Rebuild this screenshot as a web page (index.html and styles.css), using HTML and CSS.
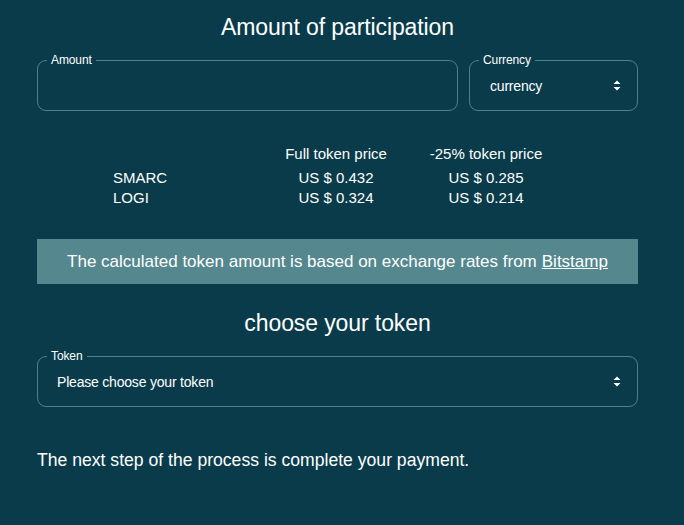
FILE: index.html
```html
<!DOCTYPE html>
<html>
<head>
<meta charset="utf-8">
<link rel="stylesheet" href="styles.css">
</head>
<body>
<main class="page">
  <h1 class="title">Amount of participation</h1>
  <div class="amount-row">
    <fieldset class="field field-amount">
      <legend>Amount</legend>
      <div class="control"></div>
    </fieldset>
    <fieldset class="field field-currency">
      <legend>Currency</legend>
      <div class="control select">
        <span>currency</span>
        <svg class="arrows" width="8" height="11" viewBox="0 0 8 11"><path d="M4 0.5 L7.5 4 L0.5 4 Z M4 10.5 L7.5 7 L0.5 7 Z" fill="#ffffff"/></svg>
      </div>
    </fieldset>
  </div>

  <div class="prices">
    <span></span><span class="head">Full token price</span><span class="head">-25% token price</span>
    <span class="name">SMARC</span><span class="val">US $ 0.432</span><span class="val">US $ 0.285</span>
    <span class="name">LOGI</span><span class="val">US $ 0.324</span><span class="val">US $ 0.214</span>
  </div>

  <div class="banner">The calculated token amount is based on exchange rates from <a href="#">Bitstamp</a></div>

  <h2 class="title title2">choose your token</h2>
  <fieldset class="field field-token">
    <legend>Token</legend>
    <div class="control select">
      <span>Please choose your token</span>
      <svg class="arrows" width="8" height="11" viewBox="0 0 8 11"><path d="M4 0.5 L7.5 4 L0.5 4 Z M4 10.5 L7.5 7 L0.5 7 Z" fill="#ffffff"/></svg>
    </div>
  </fieldset>

  <p class="next">The next step of the process is complete your payment.</p>
</main>
</body>
</html>
```

FILE: styles.css
```css
html, body {
  margin: 0;
  padding: 0;
  background: #093b4a;
}
body {
  font-family: "Liberation Sans", Arial, sans-serif;
  color: #ffffff;
}
.page {
  width: 601px;
  padding: 14px 0 0 37px;
}
.title {
  margin: 0;
  font-size: 23px;
  line-height: 26px;
  font-weight: normal;
  text-align: center;
  letter-spacing: -0.1px;
}
.amount-row {
  display: flex;
  gap: 11px;
  margin-top: 13px;
}
.field {
  margin: 0;
  padding: 0 9px 6px 9px;
  border: 1px solid #4f818a;
  border-radius: 9px;
  min-width: 0;
}
.field legend {
  padding: 0 4px;
  font-size: 12px;
  line-height: 14px;
  letter-spacing: -0.1px;
}
.field-amount { flex: 0 0 421px; box-sizing: border-box; }
.field-currency { flex: 1; box-sizing: border-box; }
.control {
  height: 37px;
}
.select {
  display: flex;
  align-items: center;
  justify-content: space-between;
  padding: 0 7px 0 11px;
  font-size: 14px;
  letter-spacing: -0.2px;
}
.field-token .select {
  padding-left: 10px;
}
.arrows {
  display: block;
}
.prices {
  display: grid;
  grid-template-columns: 148px 150px 150px;
  margin: 33px 0 0 76px;
  font-size: 15px;
  line-height: 20px;
  letter-spacing: 0;
}
.prices .head {
  text-align: center;
  margin-bottom: 4px;
}
.prices .val {
  text-align: center;
}
.banner {
  margin-top: 31px;
  height: 45px;
  background: #54878e;
  display: flex;
  align-items: center;
  justify-content: center;
  font-size: 17px;
  letter-spacing: 0;
}
.banner a {
  color: #ffffff;
  text-decoration: underline;
  margin-left: 5px;
}
.title2 {
  margin-top: 26px;
}
.field-token {
  margin-top: 13px;
}
.next {
  margin: 43px 0 0 0;
  font-size: 17.6px;
  line-height: 20px;
  letter-spacing: 0;
}
```
